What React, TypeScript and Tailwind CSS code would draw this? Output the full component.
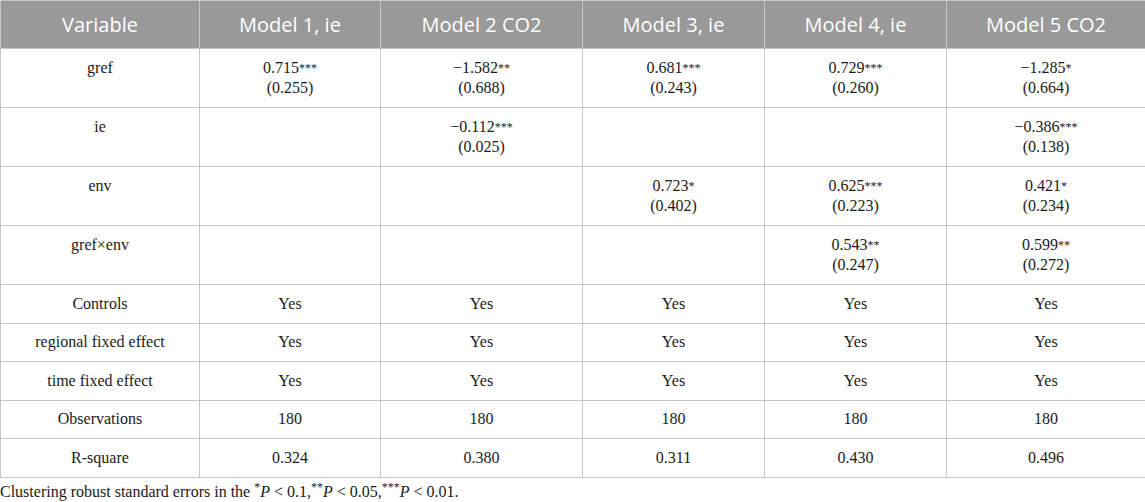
import React from 'react';

// ── Data ────────────────────────────────────────────────────────────

type Cell = { v: string; s?: string; se?: string } | null;

const HEAD = ['Variable', 'Model 1, ie', 'Model 2 CO2', 'Model 3, ie', 'Model 4, ie', 'Model 5 CO2'];
const WIDTHS = ['w-[199px]', 'w-[181px]', 'w-[202px]', 'w-[182px]', 'w-[182px]', 'w-[199px]'];

const COEF: { name: string; cells: Cell[] }[] = [
  {
    name: 'gref',
    cells: [
      { v: '0.715', s: '***', se: '(0.255)' },
      { v: '\u22121.582', s: '**', se: '(0.688)' },
      { v: '0.681', s: '***', se: '(0.243)' },
      { v: '0.729', s: '***', se: '(0.260)' },
      { v: '\u22121.285', s: '*', se: '(0.664)' },
    ],
  },
  {
    name: 'ie',
    cells: [null, { v: '\u22120.112', s: '***', se: '(0.025)' }, null, null, { v: '\u22120.386', s: '***', se: '(0.138)' }],
  },
  {
    name: 'env',
    cells: [null, null, { v: '0.723', s: '*', se: '(0.402)' }, { v: '0.625', s: '***', se: '(0.223)' }, { v: '0.421', s: '*', se: '(0.234)' }],
  },
  {
    name: 'gref\u00d7env',
    cells: [null, null, null, { v: '0.543', s: '**', se: '(0.247)' }, { v: '0.599', s: '**', se: '(0.272)' }],
  },
];

const PLAIN: [string, string[]][] = [
  ['Controls', ['Yes', 'Yes', 'Yes', 'Yes', 'Yes']],
  ['regional fixed effect', ['Yes', 'Yes', 'Yes', 'Yes', 'Yes']],
  ['time fixed effect', ['Yes', 'Yes', 'Yes', 'Yes', 'Yes']],
  ['Observations', ['180', '180', '180', '180', '180']],
  ['R-square', ['0.324', '0.380', '0.311', '0.430', '0.496']],
];

// ── App ─────────────────────────────────────────────────────────────

export default function App() {
  return (
    <div className="w-[1145px] h-[502px] bg-white overflow-hidden">
      <table className="w-[1145px] table-fixed border-collapse">
        <thead>
          <tr className="h-[48px] bg-[#999999]">
            {HEAD.map((h, i) => (
              <th
                key={h}
                className={`${WIDTHS[i]} border border-[#c6c6c6] text-center align-middle font-normal text-white text-[20px] font-['Open_Sans',sans-serif]`}
              >
                {h}
              </th>
            ))}
          </tr>
        </thead>
        <tbody className="font-['Liberation_Serif',serif] text-[16px] leading-[20px] text-[#1a1a1a]">
          {COEF.map((r) => (
            <tr key={r.name} className="h-[59px]">
              <td className="border border-[#c6c6c6] text-center align-top pt-[9px]">{r.name}</td>
              {r.cells.map((c, i) => (
                <td key={i} className="border border-[#c6c6c6] text-center align-top pt-[9px]">
                  {c && (
                    <>
                      <div>
                        {c.v}
                        <sup className="text-[12px] relative -top-[1px]">{c.s}</sup>
                      </div>
                      <div>{c.se}</div>
                    </>
                  )}
                </td>
              ))}
            </tr>
          ))}
          {PLAIN.map(([name, vals]) => (
            <tr key={name} className="h-[38.5px]">
              <td className="border border-[#c6c6c6] text-center align-middle">{name}</td>
              {vals.map((v, i) => (
                <td key={i} className="border border-[#c6c6c6] text-center align-middle">
                  {v}
                </td>
              ))}
            </tr>
          ))}
        </tbody>
      </table>
      <p className="mt-[4px] font-['Liberation_Serif',serif] text-[16px] leading-[20px] text-[#1a1a1a]">
        Clustering robust standard errors in the <sup className="text-[12px]">*</sup>
        <i>P</i> &lt; 0.1,<sup className="text-[12px]">**</sup>
        <i>P</i> &lt; 0.05,<sup className="text-[12px]">***</sup>
        <i>P</i> &lt; 0.01.
      </p>
    </div>
  );
}
